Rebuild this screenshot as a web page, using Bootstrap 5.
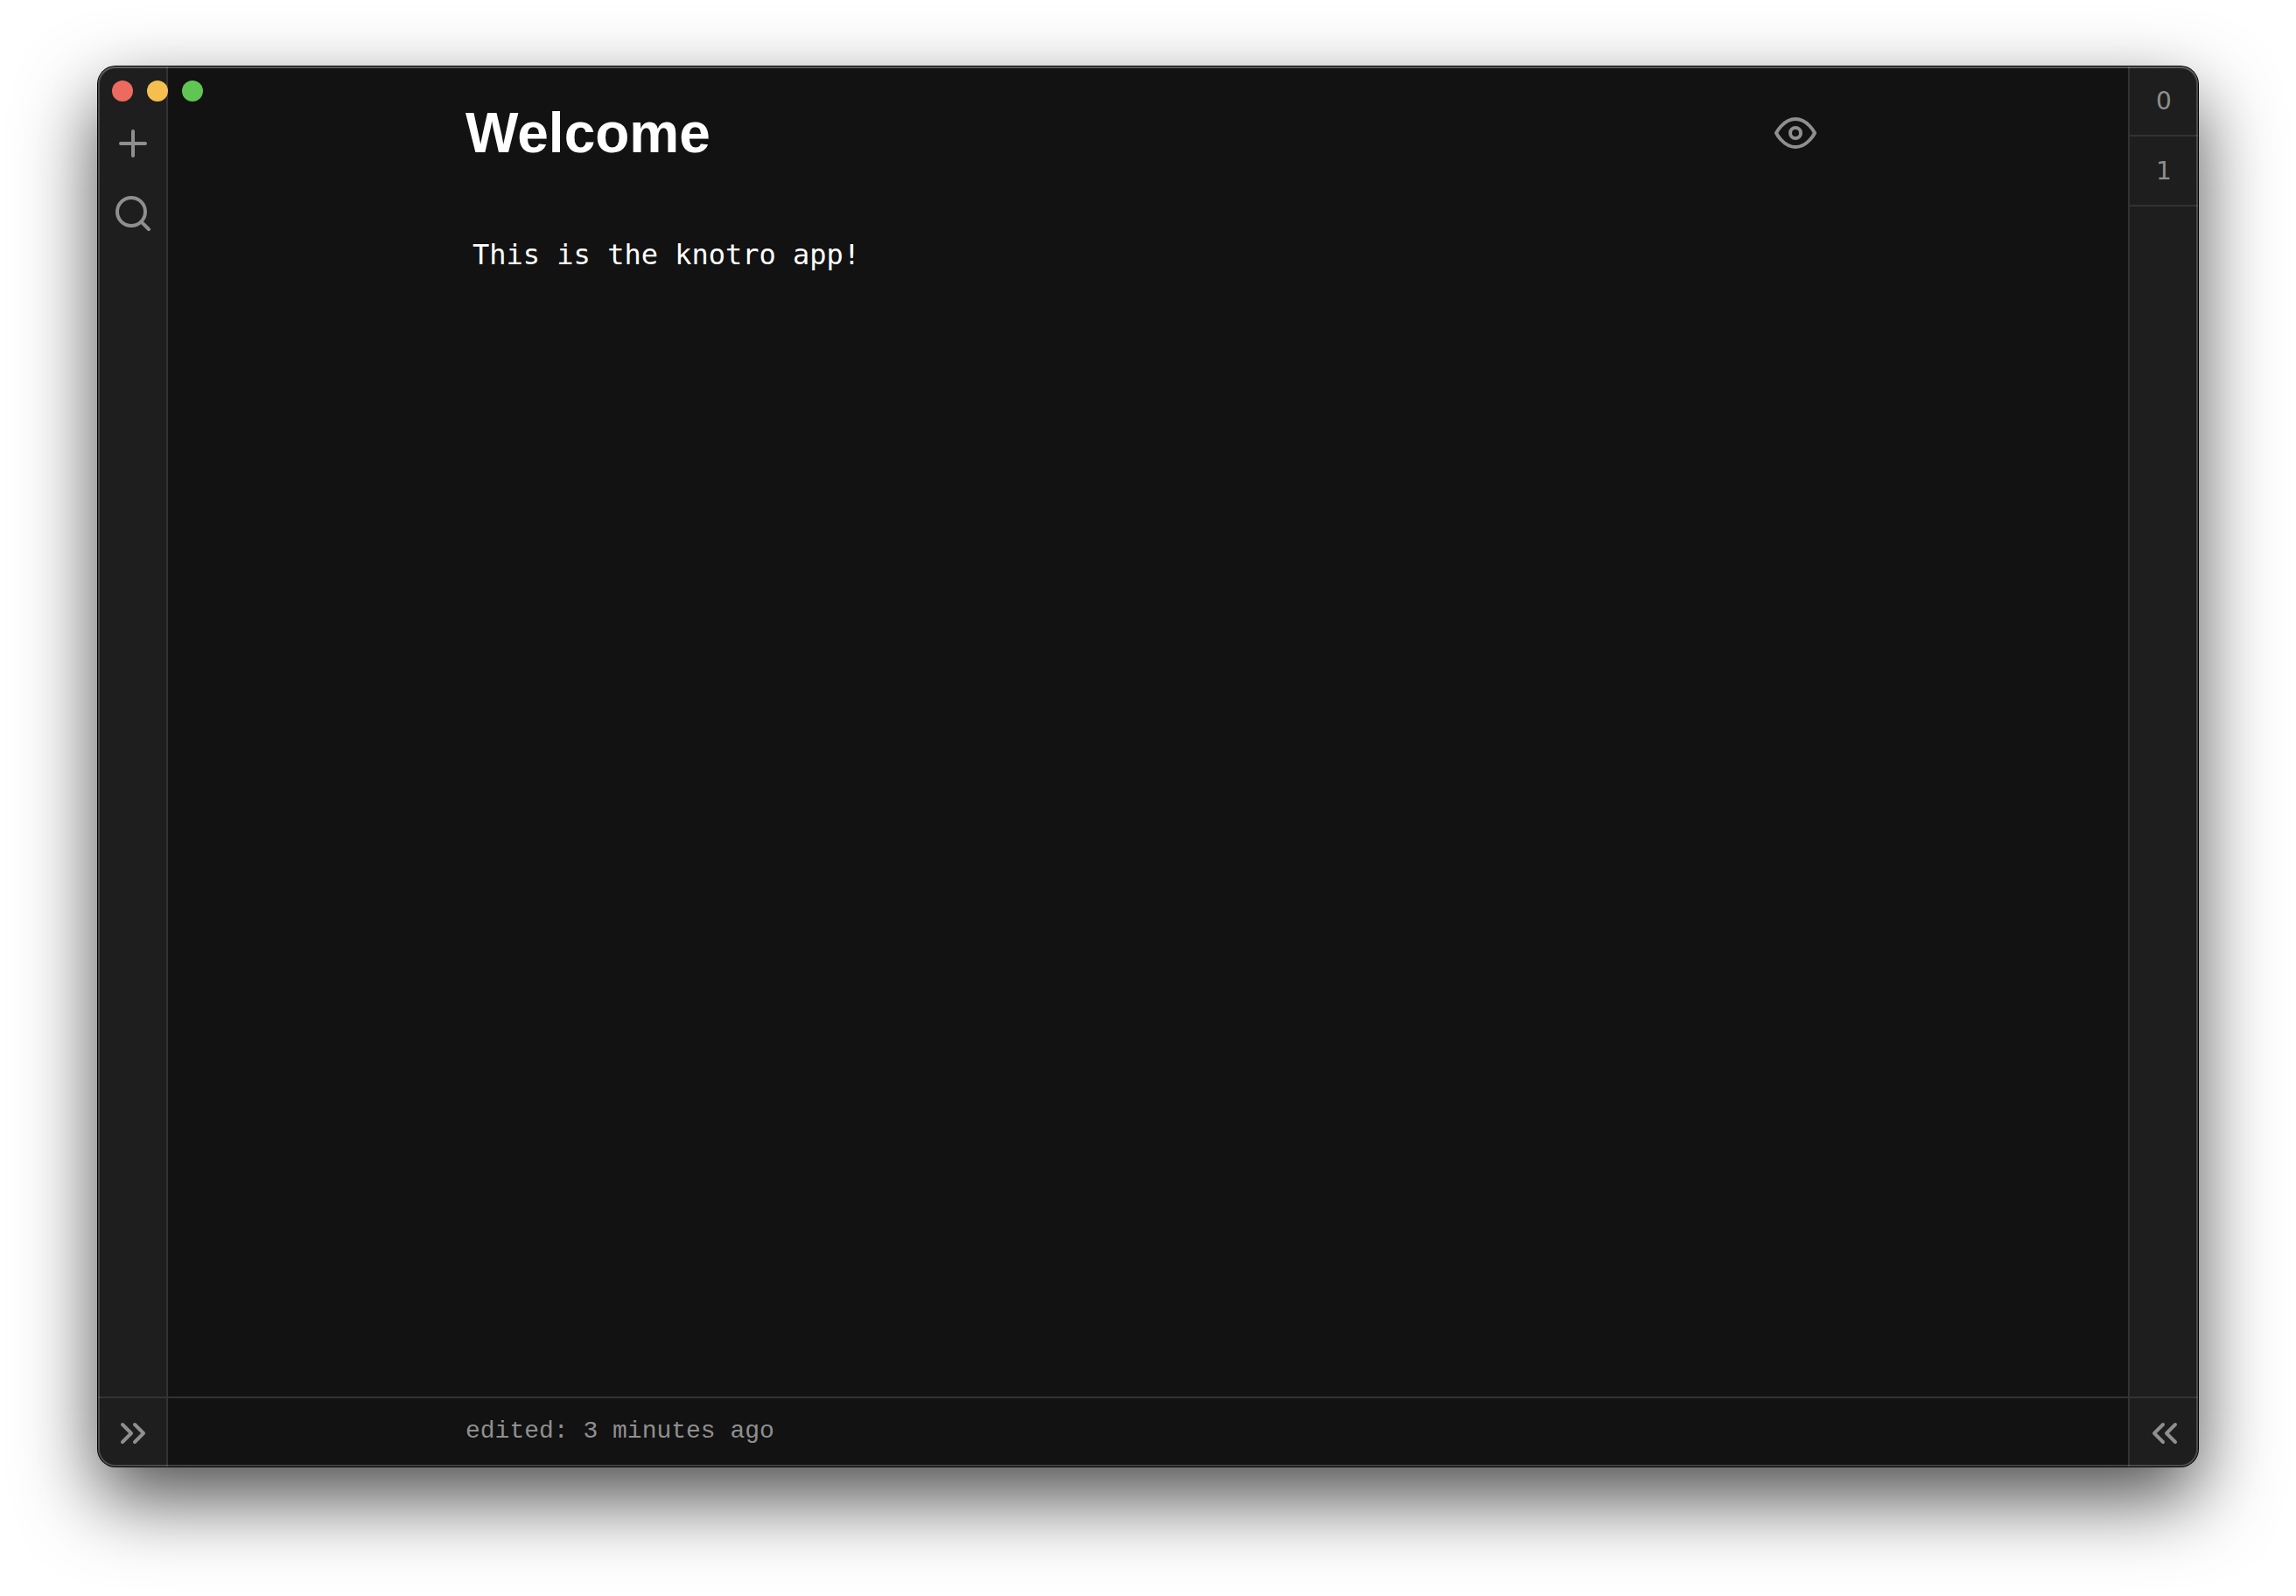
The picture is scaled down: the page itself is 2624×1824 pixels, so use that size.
<!DOCTYPE html>
<html lang="en" data-bs-theme="dark">
<head>
<meta charset="utf-8">
<meta name="viewport" content="width=device-width, initial-scale=1">
<title>knotro</title>
<link href="https://cdn.jsdelivr.net/npm/bootstrap@5.3.0/dist/css/bootstrap.min.css" rel="stylesheet">
<style>
  :root { --kn-bg: #121212; --kn-rail: #1e1e1e; --kn-line: #333333; --kn-dim: #8f8f8f; --kn-cell: 80px; }
  body { background: #fff; padding: 76px 112px 148px; font-family: "Liberation Sans", Arial, sans-serif; }
  .kn-window { background: var(--kn-bg); border-radius: 20px; box-shadow: 0 0 0 1px #000, 0 36px 88px rgba(0, 0, 0, .7); }
  .kn-window::after { content: ""; position: absolute; inset: 0; border-radius: inherit; pointer-events: none;
    box-shadow: inset 0 0 0 2px rgba(255, 255, 255, .2), inset 0 2px 0 rgba(255, 255, 255, .12); }
  .kn-lights { top: 16px; left: 16px; gap: 16px; z-index: 2; }
  .kn-light { width: 24px; height: 24px; }
  .kn-red { background: #ed6a5e; }
  .kn-yellow { background: #f5bf4f; }
  .kn-green { background: #61c554; }
  .kn-rail { width: var(--kn-cell); background: var(--kn-rail); overflow: hidden; }
  .kn-rail-left { border-right: 2px solid var(--kn-line); border-radius: 20px 0 0 20px; }
  .kn-rail-right { border-left: 2px solid var(--kn-line); border-radius: 0 20px 20px 0; }
  .kn-tools { padding-top: 48px; }
  .kn-btn { height: var(--kn-cell); padding: 0; border: 0; border-radius: 0; color: var(--kn-dim); flex: none; }
  .kn-rail-left .kn-btn { padding-left: 2px; }
  .kn-tab { border-bottom: 2px solid var(--kn-line); padding-top: 2px; font: 28px/40px "DejaVu Sans", sans-serif; }
  .kn-toggle { border-top: 2px solid var(--kn-line); padding-top: 2px; }
  .kn-rail-right .kn-toggle { padding-left: 2px; }
  .kn-btn svg { width: 48px; height: 48px; fill: none; stroke: currentColor; stroke-width: 2; stroke-linecap: round; stroke-linejoin: round; }
  .kn-column { width: 100%; max-width: 1560px; }
  .kn-head { padding-top: 36px; }
  .kn-title { font-size: 64px; line-height: 80px; color: #fff; }
  .kn-eye { width: var(--kn-cell); }
  .kn-text { padding: 0 8px; margin-top: 79px; resize: none; border: 0; outline: 0; background: transparent; color: #fff; font: 32px/40px "DejaVu Sans Mono", monospace; }
  .kn-status { height: var(--kn-cell); border-top: 2px solid var(--kn-line); padding-bottom: 2px; color: var(--kn-dim); font: 28px/40px "Liberation Mono", "Courier New", monospace; }
</style>
</head>
<body class="min-vh-100 d-flex">
<div class="kn-window position-relative d-flex flex-grow-1">
  <div class="kn-lights position-absolute d-flex" aria-hidden="true">
    <span class="kn-light kn-red rounded-circle"></span>
    <span class="kn-light kn-yellow rounded-circle"></span>
    <span class="kn-light kn-green rounded-circle"></span>
  </div>

  <nav class="kn-rail kn-rail-left d-flex flex-column justify-content-between flex-shrink-0" aria-label="Tools">
    <div class="kn-tools d-flex flex-column">
      <button type="button" class="kn-btn btn" aria-label="New note"><svg viewBox="0 0 24 24"><path d="M12 5v14M5 12h14"/></svg></button>
      <button type="button" class="kn-btn btn" aria-label="Search"><svg viewBox="0 0 24 24"><circle cx="11" cy="11" r="8"/><path d="M21 21l-4.35-4.35"/></svg></button>
    </div>
    <button type="button" class="kn-btn kn-toggle btn" aria-label="Expand left panel"><svg viewBox="0 0 24 24"><path d="M13 17l5-5-5-5M6 17l5-5-5-5"/></svg></button>
  </nav>

  <main class="d-flex flex-column flex-grow-1">
    <div class="kn-column kn-head mx-auto d-flex flex-column flex-grow-1">
      <header class="d-flex justify-content-between align-items-center">
        <h1 class="kn-title fw-bold m-0">Welcome</h1>
        <button type="button" class="kn-btn kn-eye btn" aria-label="Preview"><svg viewBox="0 0 24 24"><path d="M1 12s4-8 11-8 11 8 11 8-4 8-11 8-11-8-11-8z"/><circle cx="12" cy="12" r="3"/></svg></button>
      </header>
      <textarea class="kn-text w-100 flex-grow-1" aria-label="Note text" spellcheck="false">This is the knotro app!</textarea>
    </div>
    <footer class="kn-status d-flex align-items-center">
      <div class="kn-column mx-auto">edited: 3 minutes ago</div>
    </footer>
  </main>

  <aside class="kn-rail kn-rail-right d-flex flex-column justify-content-between flex-shrink-0" aria-label="Links">
    <div class="d-flex flex-column">
      <button type="button" class="kn-btn kn-tab btn">0</button>
      <button type="button" class="kn-btn kn-tab btn">1</button>
    </div>
    <button type="button" class="kn-btn kn-toggle btn" aria-label="Expand right panel"><svg viewBox="0 0 24 24"><path d="M11 17l-5-5 5-5M18 17l-5-5 5-5"/></svg></button>
  </aside>
</div>
<script src="https://cdn.jsdelivr.net/npm/bootstrap@5.3.0/dist/js/bootstrap.bundle.min.js"></script>
</body>
</html>
